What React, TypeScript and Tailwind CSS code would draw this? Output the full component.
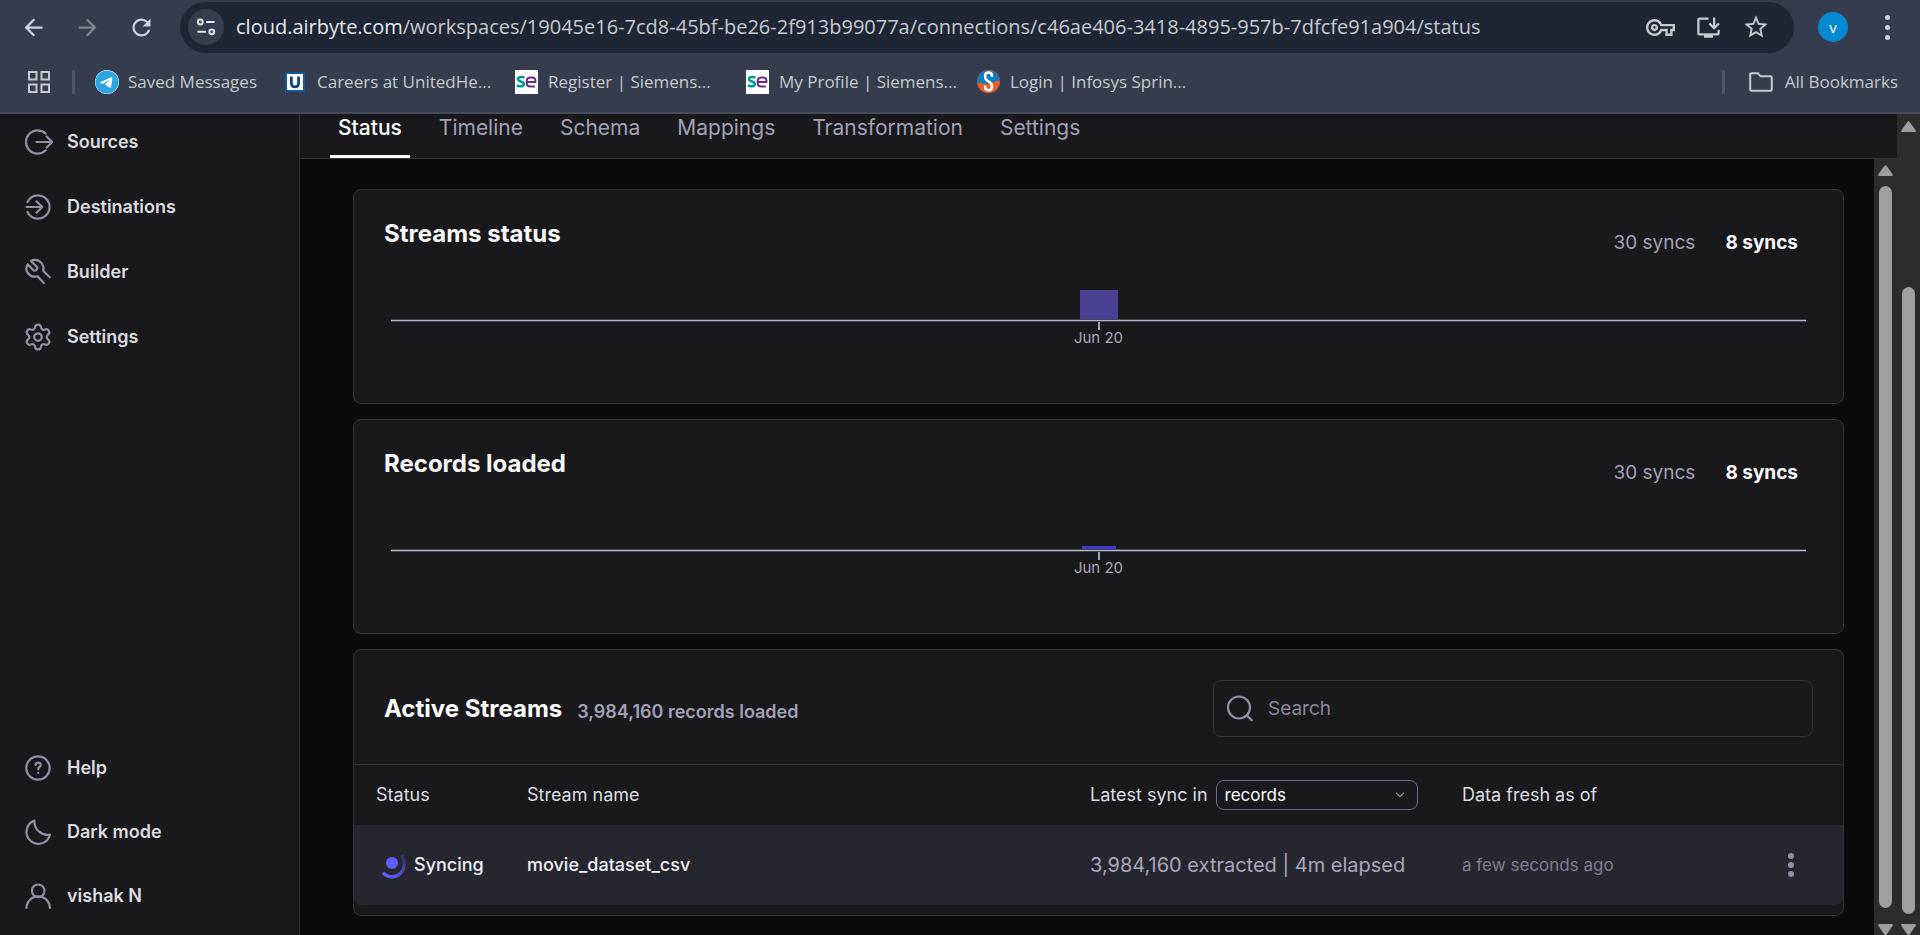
import React from "react";
import { ChevronDown, Settings } from "lucide-react";
import {
  MdArrowBack,
  MdArrowForward,
  MdInstallDesktop,
  MdOutlineVpnKey,
  MdRefresh,
  MdStarBorder,
} from "react-icons/md";
import { FaTelegram } from "react-icons/fa6";

const chromeFont = "font-['Open_Sans','Noto_Sans',sans-serif]";

/* ---------- Browser chrome ---------- */

function TuneIcon() {
  return (
    <svg width="20" height="20" viewBox="0 0 20 20" fill="none" stroke="#e3e5ea" strokeWidth="2">
      <circle cx="4.3" cy="5" r="2.4" />
      <path d="M10 5h8.5M1.5 14.8h8.5" />
      <circle cx="15.8" cy="14.8" r="2.4" />
    </svg>
  );
}

function AppsIcon() {
  return (
    <svg width="22" height="22" viewBox="0 0 22 22" fill="none" stroke="#c7c9ce" strokeWidth="2">
      <rect x="1" y="1" width="7.5" height="7.5" />
      <rect x="13.5" y="1" width="7.5" height="7.5" />
      <rect x="1" y="13.5" width="7.5" height="7.5" />
      <rect x="13.5" y="13.5" width="7.5" height="7.5" />
    </svg>
  );
}

function FolderIcon() {
  return (
    <svg width="24" height="20" viewBox="0 0 24 20" fill="none" stroke="#c7c9ce" strokeWidth="2" strokeLinejoin="round">
      <path d="M1.2 2.4c0-.7.5-1.2 1.2-1.2h6.4l2.6 3h10.2c.7 0 1.2.5 1.2 1.2v12.2c0 .7-.5 1.2-1.2 1.2H2.4c-.7 0-1.2-.5-1.2-1.2z" />
    </svg>
  );
}

function UnitedIcon() {
  return (
    <svg width="20" height="20" viewBox="0 0 20 20">
      <rect width="20" height="20" fill="#0f5a96" />
      <rect x="2" y="2" width="16" height="16" fill="#fff" />
      <path d="M6.4 4.5v6.8c0 2.4 1.3 3.6 3.6 3.6s3.6-1.2 3.6-3.6V4.5" fill="none" stroke="#0f4c86" strokeWidth="2.8" />
    </svg>
  );
}

function SiemensIcon() {
  return (
    <svg width="23" height="24" viewBox="0 0 23 24" fill="none">
      <rect width="23" height="24" fill="#fff" />
      <path d="M9.4 7.6C7.6 6.6 3 6.500 3 9.200c0 2.800 5.800 1.800 5.800 4.700 0 2.900-5 2.600-7 1.500" stroke="#009999" strokeWidth="2.500" />
      <path d="M12.500 12h7.900v-1.300c0-2.200-1.200-3.300-3.600-3.300h-1.300c-2.500 0-3.800 1.200-3.800 3.500v2.200c0 2.300 1.300 3.500 3.800 3.500h4.400" stroke="#6b2a93" strokeWidth="2" />
    </svg>
  );
}

function InfosysIcon() {
  return (
    <svg width="23" height="23" viewBox="0 0 23 23" fill="none">
      <circle cx="11.500" cy="11.500" r="11.500" fill="#f05a28" />
      <path d="M0 13A11.500 11.500 0 1 1 23 11c-6-1-8 3-12 3S4 12 0 13z" fill="#0a7cc4" />
      <path d="M14.800 7V5.200c0-1.600-1-2.600-3.300-2.600S8.200 3.600 8.200 5.200v2.300c0 3.600 6.600 4 6.600 7.700v2.400c0 1.600-1 2.600-3.300 2.600s-3.300-1-3.300-2.600V15.500" stroke="#fff" strokeWidth="2.600" />
    </svg>
  );
}

const bookmarks = [
  { label: "Saved Messages", icon: <FaTelegram className="size-6 rounded-full bg-white text-[#2ea4e0]" />, cls: "gap-[9px] pl-5 w-[210px]" },
  { label: "Careers at UnitedHe...", icon: <UnitedIcon />, cls: "gap-3 w-[230px]" },
  { label: "Register | Siemens...", icon: <SiemensIcon />, cls: "gap-[10px] w-[231px]" },
  { label: "My Profile | Siemens...", icon: <SiemensIcon />, cls: "gap-[10px] w-[231px]" },
  { label: "Login | Infosys Sprin...", icon: <InfosysIcon />, cls: "gap-[10px]" },
];

function BrowserChrome() {
  return (
    <header className={`shrink-0 border-b-2 border-[#454b59] bg-[#353c4d] text-[#c7c9ce] ${chromeFont}`}>
      <div className="flex h-[53px] items-center pt-px">
        <nav className="flex items-center gap-[27px] pl-5 pr-[25px]">
          <button aria-label="Back" className="text-[#c9d3ea]"><MdArrowBack size={27} /></button>
          <button aria-label="Forward" className="text-[#7c8290]"><MdArrowForward size={27} /></button>
          <button aria-label="Reload" className="text-[#c9d3ea]"><MdRefresh size={27} /></button>
        </nav>
        <div className="flex h-[51px] min-w-0 flex-1 items-center rounded-full bg-[#1e2636] pl-2 pr-6">
          <button aria-label="Site information" className="flex size-9 shrink-0 items-center justify-center rounded-full bg-[#353c4d]">
            <TuneIcon />
          </button>
          <p className="ml-3 min-w-0 flex-1 truncate text-[20px] leading-7">
            <span className="text-[#e6e8ee]">cloud.airbyte.com</span>
            /workspaces/19045e16-7cd8-45bf-be26-2f913b99077a/connections/c46ae406-3418-4895-957b-7dfcfe91a904/status
          </p>
          <div className="flex items-center gap-5">
            <button aria-label="Passwords"><MdOutlineVpnKey size={29} /></button>
            <button aria-label="Install"><MdInstallDesktop size={27} /></button>
            <button aria-label="Bookmark this tab"><MdStarBorder size={28} /></button>
          </div>
        </div>
        <button className="ml-6 flex size-[30px] items-center justify-center rounded-full bg-[#0488d1] text-[15px] text-white">v</button>
        <button aria-label="Menu" className="ml-[35px] mr-[29px] flex w-2 flex-col items-center gap-[5px]">
          <span className="size-[5px] rounded-full bg-[#c9d3ea]" />
          <span className="size-[5px] rounded-full bg-[#c9d3ea]" />
          <span className="size-[5px] rounded-full bg-[#c9d3ea]" />
        </button>
      </div>
      <div className="flex h-[59px] items-center pb-[2px] pl-7 pr-[22px] text-[17px] leading-6">
        <button aria-label="Apps" className="mr-[22px]"><AppsIcon /></button>
        <span className="h-6 w-[3px] rounded bg-[#4d5568]" />
        {bookmarks.map((b) => (
          <a key={b.label} href="#" className={`flex shrink-0 items-center whitespace-nowrap ${b.cls}`}>
            {b.icon}
            {b.label}
          </a>
        ))}
        <span className="ml-auto h-6 w-[3px] rounded bg-[#4d5568]" />
        <a href="#" className="ml-6 flex items-center gap-3 whitespace-nowrap"><FolderIcon />All Bookmarks</a>
      </div>
    </header>
  );
}

/* ---------- Sidebar ---------- */

function Glyph({ children }: { children: React.ReactNode }) {
  return (
    <svg width="30" height="30" viewBox="0 0 30 30" fill="none" stroke="currentColor" strokeWidth="2.200" strokeLinecap="round" strokeLinejoin="round">
      {children}
    </svg>
  );
}

const topItems = [
  {
    label: "Sources",
    icon: <Glyph><path d="M22.700 6.700A11.600 11.600 0 1 0 22.700 23.300M13.500 15H29M23.700 9.500 29.200 15l-5.500 5.500" /></Glyph>,
  },
  {
    label: "Destinations",
    icon: <Glyph><path d="M4.500 10A11.600 11.600 0 1 1 4.500 20M3.500 15H19M13.500 9.300 19.300 15l-5.800 5.700" /></Glyph>,
  },
  {
    label: "Builder",
    icon: <Glyph><path d="M26.800 20.200 20.300 14c1.200-5.600-2.500-10.900-8-11.200-1.700-.1-3.200.3-4.400 1.100l6.400 6.300c.3 2-1.200 3.700-3.300 3.500L4.600 7.400C3 10 3.200 13.900 5.200 16.500c2.200 2.800 5.800 3.700 9.300 2.700l6.300 6.900" /></Glyph>,
  },
  { label: "Settings", icon: <Settings size={30} strokeWidth={1.8} /> },
];

const bottomItems = [
  {
    label: "Help",
    icon: (
      <Glyph>
        <circle cx="15" cy="15" r="11.700" />
        <path d="M12.500 12c.2-1.500 1.300-2.300 2.600-2.300 1.500 0 2.600 1 2.600 2.300 0 1.900-2.500 2-2.500 4.300M15.200 19.900v.1" />
      </Glyph>
    ),
  },
  { label: "Dark mode", icon: <Glyph><path d="M11.500 3.600A11.900 11.900 0 1 0 27 17.500A13 13 0 0 1 11.500 3.600z" /></Glyph> },
  {
    label: "vishak N",
    icon: (
      <Glyph>
        <circle cx="15.200" cy="9.800" r="6.300" />
        <path d="M3.500 27a11.700 11.700 0 0 1 23.400 0" />
      </Glyph>
    ),
  },
];

function NavList({ items, gap }: { items: { label: string; icon: React.ReactNode }[]; gap: string }) {
  return (
    <ul className={`flex flex-col ${gap}`}>
      {items.map((i) => (
        <li key={i.label}>
          <a href="#" className="flex h-10 items-center gap-[14px] pl-[23px] text-[18px] font-semibold leading-6 text-[#dcdce0]">
            <span className="text-[#9090a6]">{i.icon}</span>
            {i.label}
          </a>
        </li>
      ))}
    </ul>
  );
}

/* ---------- Scrollbar ---------- */

function Scrollbar({ pad, thumb }: { pad: string; thumb: string }) {
  return (
    <div aria-hidden="true" className={`flex w-[23px] shrink-0 flex-col items-center bg-[#2c2c2c] ${pad}`}>
      <svg className="shrink-0" width="15" height="11" viewBox="0 0 15 11"><path d="M6.300 1Q7.500-.6 8.700 1L14.600 9.200Q15.300 11 13.600 11H1.400Q-.3 11 .4 9.200z" fill="#9f9f9f" /></svg>
      <div className={`w-[13px] flex-1 rounded-full bg-[#9f9f9f] ${thumb}`} />
      <svg className="shrink-0" width="15" height="11" viewBox="0 0 15 11"><path d="M6.300 10.500Q7.500 12 8.700 10.500L14.600 1.800Q15.300 0 13.600 0H1.400Q-.3 0 .4 1.800z" fill="#9f9f9f" /></svg>
    </div>
  );
}

/* ---------- Cards ---------- */

const cardBase = "rounded-[8px] border border-[#323237] bg-[#19191b]";

function ChartCard({ title, bar }: { title: string; bar: string }) {
  return (
    <section className={`${cardBase} pb-[57px]`}>
      <div className="flex items-start justify-between pl-[30px] pr-[30px] pt-[29px]">
        <h2 className="text-[24px] font-bold leading-[30px] text-[#f8f8fa]">{title}</h2>
        <div className="mt-[9px] flex text-[19px] leading-[30px]">
          <button className="px-[15px] text-[#a3a1b8]">30 syncs</button>
          <button className="px-[15px] font-bold text-[#f8f8fa]">8 syncs</button>
        </div>
      </div>
      <div className="mx-[37px] flex flex-col items-center">
        <div className="flex h-[61px] items-end">
          <div className={bar} />
        </div>
        <div className="h-[3px] w-full border-y border-[#45454f] bg-[#b4b3c8]" />
        <div className="h-2 w-[2px] bg-[#a3a1b8]" />
        <span className="text-[15px] leading-4 text-[#a9a7bd]">Jun 20</span>
      </div>
    </section>
  );
}

function SyncSpinner() {
  return (
    <svg width="26" height="28" viewBox="0 0 26 28" fill="none">
      <defs>
        <linearGradient id="sweep" x1="2" y1="22" x2="23" y2="3" gradientUnits="userSpaceOnUse">
          <stop offset="0" stopColor="#615eff" />
          <stop offset="0.400" stopColor="#524fd0" />
          <stop offset="1" stopColor="#2f2e52" />
        </linearGradient>
      </defs>
      <circle cx="11" cy="12" r="6" fill="#615eff" />
      <path d="M2 21.500C6 26.500 13 27 18 23.500c5.500-4 7-12.500 3-19.500" stroke="url(#sweep)" strokeWidth="3.400" />
    </svg>
  );
}

function ActiveStreams() {
  return (
    <section className={`${cardBase} pb-[10px]`}>
      <div className="flex items-center justify-between gap-6 border-b border-[#323237] px-[30px] pb-[27px] pt-[30px]">
        <div className="flex items-end gap-[15px]">
          <h2 className="text-[24px] font-bold leading-[30px] text-white">Active Streams</h2>
          <p className="text-[18px] font-semibold leading-6 text-[#a3a1b8]">3,984,160 records loaded</p>
        </div>
        <label className="flex h-[57px] w-[600px] items-center gap-[13px] rounded-[8px] border border-[#323237] pl-[11px]">
          <svg width="30" height="30" viewBox="0 0 30 30" fill="none" stroke="#9290a8" strokeWidth="2.200" strokeLinecap="round">
            <circle cx="14" cy="13.500" r="11" />
            <path d="m21.800 21.300 5 5" />
          </svg>
          <input type="search" aria-label="Search" placeholder="Search" className="min-w-0 flex-1 bg-transparent text-[19px] leading-7 text-white outline-none placeholder:text-[#8a889f]" />
        </label>
      </div>
      <table className="w-full table-fixed border-separate border-spacing-0 text-left text-[18px] leading-6">
        <colgroup>
          <col className="w-[150px]" />
          <col />
          <col className="w-[373px]" />
          <col className="w-[250px]" />
          <col className="w-[153px]" />
        </colgroup>
        <thead>
          <tr className="h-[60px] text-[#dcdce2]">
            <th className="pl-[22px] font-normal">Status</th>
            <th className="pl-[23px] font-normal">Stream name</th>
            <th className="pl-[23px] font-normal">
              <div className="flex items-center gap-2">
                <label htmlFor="unit">Latest sync in</label>
                <div className="relative w-[202px]">
                  <select id="unit" className="block h-[30px] w-full appearance-none rounded-[8px] border border-[#6d6988] bg-transparent pl-2 text-[17px] leading-6 text-white">
                    <option>records</option>
                    <option>bytes</option>
                  </select>
                  <ChevronDown size={14} className="pointer-events-none absolute right-[11px] top-2 text-[#9290a8]" />
                </div>
              </div>
            </th>
            <th className="pl-[22px] font-normal">Data fresh as of</th>
            <th aria-label="Actions" />
          </tr>
        </thead>
        <tbody>
          <tr className="h-20 [&>td]:bg-[#262631]">
            <td className="rounded-bl-[8px] pl-[27px]">
              <div className="flex items-center gap-[7px] font-medium text-[#f0f0f4]"><SyncSpinner />Syncing</div>
            </td>
            <td className="pl-[23px] font-medium text-[#f0f0f4]">movie_dataset_csv</td>
            <td className="whitespace-nowrap pl-[23px] text-[20px] text-[#a9a7bd]">3,984,160 extracted | 4m elapsed</td>
            <td className="pl-[22px] text-[17px] text-[#7f7d94]">a few seconds ago</td>
            <td className="rounded-br-[8px] pr-[49px]">
              <button aria-label="Stream actions" className="ml-auto flex w-[6px] flex-col items-center gap-[3px]">
                <span className="size-[6px] rounded-full bg-[#9290a8]" />
                <span className="size-[6px] rounded-full bg-[#9290a8]" />
                <span className="size-[6px] rounded-full bg-[#9290a8]" />
              </button>
            </td>
          </tr>
        </tbody>
      </table>
    </section>
  );
}

const tabs = ["Status", "Timeline", "Schema", "Mappings", "Transformation", "Settings"];

export default function App() {
  return (
    <div className="flex h-screen flex-col overflow-hidden bg-[#0b0b0d] font-['Inter',sans-serif]">
      <BrowserChrome />
      <div className="flex min-h-0 flex-1">
        <aside className="flex w-[300px] shrink-0 flex-col justify-between border-r border-[#323237] bg-[#19191b] pb-[19px] pt-2">
          <NavList items={topItems} gap="gap-[25px]" />
          <NavList items={bottomItems} gap="gap-6" />
        </aside>
        <div className="flex min-w-0 flex-1 flex-col">
          <nav className="flex shrink-0 gap-[21px] border-b border-[#323237] bg-[#19191b] pl-[30px]">
            {tabs.map((t, i) => (
              <button
                key={t}
                className={
                  i === 0
                    ? "h-11 border-b-[3px] border-white px-2 pb-[13px] text-[21px] font-medium leading-[26px] text-white"
                    : "h-11 border-b-[3px] border-transparent px-2 pb-[13px] text-[21px] leading-[26px] text-[#a3a1b8]"
                }
              >
                {t}
              </button>
            ))}
          </nav>
          <div className="flex min-h-0 flex-1">
            <main className="flex min-w-0 flex-1 flex-col gap-[15px] overflow-hidden pl-[53px] pr-[30px] pt-[30px]">
              <ChartCard title="Streams status" bar="h-[29px] w-[38px] bg-[#4a4094]" />
              <ChartCard title="Records loaded" bar="h-[3px] w-[34px] bg-[#4038cc]" />
              <ActiveStreams />
            </main>
            <Scrollbar pad="pt-[6px]" thumb="mb-4 mt-[10px]" />
          </div>
        </div>
        <Scrollbar pad="pt-[7px]" thumb="mb-[10px] mt-[155px]" />
      </div>
    </div>
  );
}
